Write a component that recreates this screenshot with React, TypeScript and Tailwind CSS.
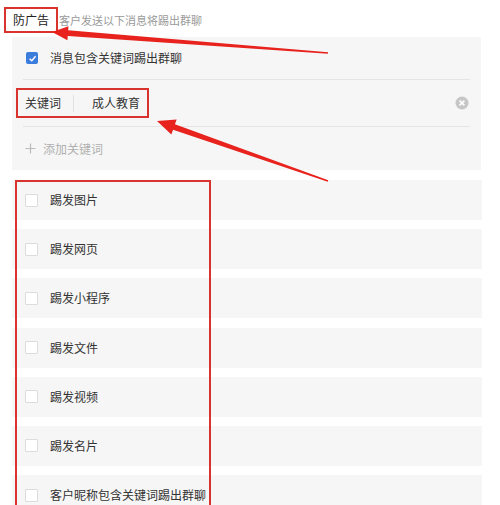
import React from 'react';

const items = ['踢发图片', '踢发网页', '踢发小程序', '踢发文件', '踢发视频', '踢发名片', '客户昵称包含关键词踢出群聊'];

// builds a tapered arrow polygon from tip to tail
function arrowPoints(tip: [number, number], tail: [number, number], headLen: number, headHalf: number) {
  const dx = tail[0] - tip[0];
  const dy = tail[1] - tip[1];
  const len = Math.hypot(dx, dy);
  const ux = dx / len;
  const uy = dy / len;
  const nx = -uy;
  const ny = ux;
  const bx = tip[0] + ux * headLen;
  const by = tip[1] + uy * headLen;
  const pts = [
    [tip[0], tip[1]],
    [bx + nx * headHalf, by + ny * headHalf],
    [bx + nx * 2.9, by + ny * 2.9],
    [tail[0] + nx * 0.8, tail[1] + ny * 0.8],
    [tail[0] - nx * 0.8, tail[1] - ny * 0.8],
    [bx - nx * 2.9, by - ny * 2.9],
    [bx - nx * headHalf, by - ny * headHalf],
  ];
  return pts.map((p) => p.join(',')).join(' ');
}

function Checkbox({ checked }: { checked?: boolean }) {
  if (checked) {
    return (
      <span className="flex h-[12px] w-[12px] items-center justify-center rounded-[2px] bg-[#3b7ddc]">
        <svg width="9" height="9" viewBox="0 0 10 10">
          <path d="M1.8 5.2 L4.2 7.4 L8.4 2.6" fill="none" stroke="#fff" strokeWidth="1.6" />
        </svg>
      </span>
    );
  }
  return <span className="block h-[13px] w-[13px] rounded-[1px] border border-[#dcdcdc] bg-white" />;
}

export default function App() {
  return (
    <div
      className="relative h-[505px] w-[500px] overflow-hidden bg-white text-[#333]"
      style={{ fontFamily: '"Noto Sans CJK SC", "Noto Sans", sans-serif' }}
    >
      <div className="flex items-center pl-[4px] pt-[7px]">
        <span className="border-2 border-[#d8332d] px-[7px] py-[2px] text-[12px] leading-[18px] text-[#222]">防广告</span>
        <span className="ml-[1px] text-[11px] leading-[18px] text-[#9a9a9a]">客户发送以下消息将踢出群聊</span>
      </div>

      <div className="ml-[12px] mr-[19px] mt-[4px] bg-[#f6f6f6] px-[11px]">
        <div className="flex h-[43px] items-center border-b border-[#e4e4e4] pl-[3px]">
          <Checkbox checked />
          <span className="ml-[12px] text-[12px]">消息包含关键词踢出群聊</span>
        </div>
        <div className="flex h-[47px] items-center justify-between border-b border-[#e4e4e4]">
          <div className="-ml-[7px] flex h-[30px] w-[133px] items-center border-2 border-[#d8332d] pl-[7px]">
            <span className="text-[12px]">关键词</span>
            <span className="ml-[12px] h-[17px] w-px bg-[#e0e0e0]" />
            <span className="ml-[18px] text-[12px]">成人教育</span>
          </div>
          <svg width="14" height="14" viewBox="0 0 14 14" className="mr-[1px]">
            <circle cx="7" cy="7" r="6.5" fill="#c6c6c6" />
            <path d="M4.6 4.6 L9.4 9.4 M9.4 4.6 L4.6 9.4" stroke="#fff" strokeWidth="1.6" />
          </svg>
        </div>
        <div className="flex h-[43px] items-center pl-[2px] text-[#b0b0b0]">
          <svg width="11" height="11" viewBox="0 0 11 11">
            <path d="M5.5 0.5 V10.5 M0.5 5.5 H10.5" stroke="#bbb" strokeWidth="1.2" />
          </svg>
          <span className="ml-[7px] text-[12px]">添加关键词</span>
        </div>
      </div>

      <div className="mt-[10px] flex flex-col gap-[9.2px]">
        {items.map((label) => (
          <div key={label} className="ml-[12px] mr-[18px] flex h-[40px] shrink-0 items-center bg-[#f6f6f6] pl-[13px]">
            <Checkbox />
            <span className="ml-[12px] text-[12px]">{label}</span>
          </div>
        ))}
      </div>

      {/* annotation layer */}
      <div className="pointer-events-none absolute left-[15px] top-[180px] h-[340px] w-[196px] border-2 border-[#d8332d]" />
      <svg className="pointer-events-none absolute left-0 top-0" width="500" height="505">
        <polygon points={arrowPoints([52, 32], [328, 53], 16, 7)} fill="#e8231e" />
        <polygon points={arrowPoints([157, 121], [328, 181], 18, 8)} fill="#e8231e" />
      </svg>
    </div>
  );
}
